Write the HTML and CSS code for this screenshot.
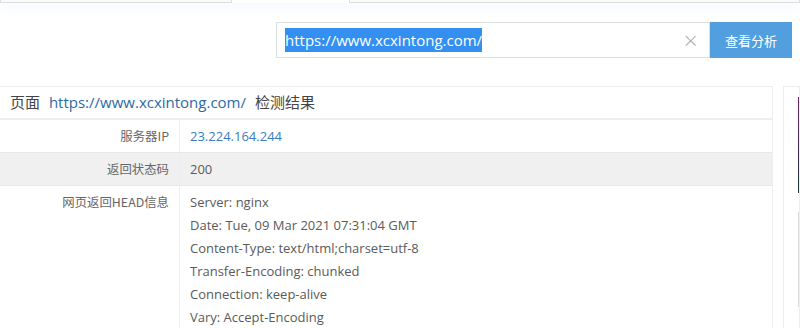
FILE: index.html
```html
<!DOCTYPE html>
<html lang="zh-CN">
<head>
    <meta charset="UTF-8">
    <title>网页HEAD信息检测</title>
    <link rel="stylesheet" href="styles.css">
</head>
<body>
    <div class="tabs">
        <div class="tab"></div>
        <div class="tab active"></div>
        <div class="tab"></div>
    </div>

    <div class="search-bar">
        <div class="search-box">
            <span class="search-text"><span class="selected">https://www.xcxintong.com/</span></span>
            <span class="clear">&times;</span>
        </div>
        <button class="search-btn">查看分析</button>
    </div>

    <div class="content">
        <div class="result-card">
            <div class="result-title">页面 <a href="#">https://www.xcxintong.com/</a> 检测结果</div>
            <div class="row">
                <div class="label">服务器IP</div>
                <div class="value"><a href="#">23.224.164.244</a></div>
            </div>
            <div class="row alt">
                <div class="label">返回状态码</div>
                <div class="value">200</div>
            </div>
            <div class="row">
                <div class="label">网页返回HEAD信息</div>
                <div class="value lines">
                    <p>Server: nginx</p>
                    <p>Date: Tue, 09 Mar 2021 07:31:04 GMT</p>
                    <p>Content-Type: text/html;charset=utf-8</p>
                    <p>Transfer-Encoding: chunked</p>
                    <p>Connection: keep-alive</p>
                    <p>Vary: Accept-Encoding</p>
                </div>
            </div>
        </div>

        <div class="side-card">
            <div class="side-banner"></div>
            <div class="side-box"></div>
        </div>
    </div>
</body>
</html>
```

FILE: styles.css
```css
body {
    margin: 0;
    font-family: "Open Sans", "Noto Sans CJK SC", sans-serif;
    color: #555;
    background-color: #fff;
    overflow: hidden;
}

.tabs {
    display: flex;
    height: 3px;
    box-shadow: 0 4px 8px rgba(200, 215, 240, 0.35);
}

.tab {
    border: 1px solid #ddd;
    border-top: none;
    background-color: #fafafa;
}

.tab:first-child {
    width: 230px;
}

.tab.active {
    width: 115px;
    background-color: #fff;
    border-color: #fff;
}

.tab:last-child {
    flex: 1;
}

.search-bar {
    display: flex;
    justify-content: flex-end;
    padding: 19px 8px 0 0;
    height: 36px;
}

.search-box {
    width: 434px;
    border: 1px solid #ddd;
    display: flex;
    align-items: center;
    justify-content: space-between;
    padding: 0 8px;
    box-sizing: border-box;
}

.search-text {
    font-size: 15px;
    color: #333;
}

.selected {
    background-color: #3390f0;
    color: #fff;
    padding: 2px 0;
}

.clear {
    font-family: "DejaVu Sans", sans-serif;
    font-weight: 200;
    font-size: 20px;
    color: #aaa;
    margin-right: 2px;
}

.search-btn {
    width: 82px;
    border: none;
    background-color: #519fdf;
    color: #fff;
    font-family: "Noto Sans CJK SC", sans-serif;
    font-size: 13px;
    padding: 0;
}

.content {
    display: flex;
    gap: 10px;
    margin-top: 28px;
}

.result-card {
    width: 773px;
    border: 1px solid #eee;
    border-left: none;
    box-sizing: border-box;
    flex-shrink: 0;
}

.result-title {
    height: 31px;
    line-height: 31px;
    padding-left: 10px;
    font-size: 15px;
    color: #444;
    border-bottom: 2px solid #eee;
}

.result-title a {
    color: #2a6aa5;
    text-decoration: none;
    margin: 0 5px;
}

.row {
    display: flex;
    border-bottom: 1px solid #e8e8e8;
    font-size: 13px;
}

.row.alt {
    background-color: #f0f0f0;
}

.label {
    width: 180px;
    box-sizing: border-box;
    padding: 8px 10px 8px 0;
    text-align: right;
    line-height: 16px;
    border-right: 1px solid #eee;
    font-family: "Noto Sans CJK SC", sans-serif;
    color: #666;
    font-size: 12.4px;
}

.value {
    padding: 8px 10px;
    line-height: 16px;
    color: #5a5a5a;
}

.value a {
    color: #3b7cc0;
    text-decoration: none;
}

.value.lines {
    padding: 5px 10px;
}

.lines p {
    margin: 0;
    line-height: 23px;
}

.side-card {
    flex: 1;
    border: 1px solid #eee;
    padding: 10px 0 0 14px;
}

.side-banner {
    height: 96px;
    background: linear-gradient(#6b2a6e, #3a2d52 60%, #1c3b36);
}

.side-box {
    margin-top: 19px;
    height: 93px;
    border: 1px solid #ddd;
    border-right: none;
}
```
